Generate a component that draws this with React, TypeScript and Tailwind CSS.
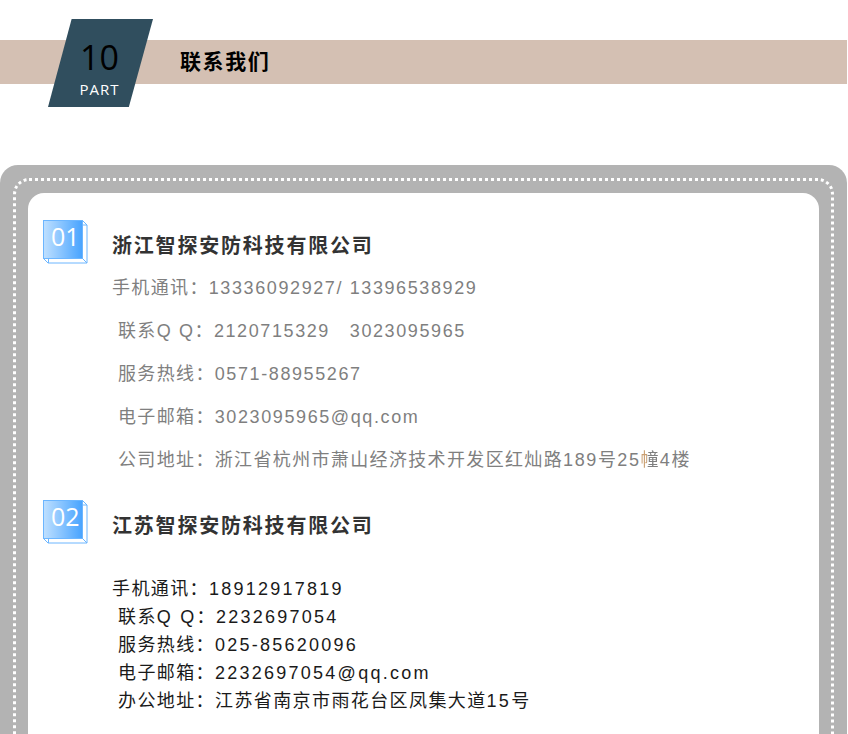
const FONT = "font-['Liberation_Sans','Noto_Sans_CJK_SC',sans-serif]";

function Badge({ n }: { n: string }) {
  const id = `g${n}`;
  return (
    <div className="relative h-[44px] w-[45px] shrink-0">
      <svg width="45" height="44" viewBox="0 0 45 44" className="block">
        <defs>
          <linearGradient id={id} x1="0" x2="1" y1="0" y2="0">
            <stop offset="0" stopColor="#bfe0ff" />
            <stop offset="1" stopColor="#47a3ff" />
          </linearGradient>
        </defs>
        <path d="M39.5 0.5 L44 5 V43 H5 L0.5 38.5" fill="#fff" stroke="#6cb6ff" strokeWidth="1" />
        <path d="M5.5 38.5 V43 M39.5 38.5 L44 43 M39.5 5 H44" fill="none" stroke="#6cb6ff" strokeWidth="1" />
        <rect x="0.5" y="0.5" width="39" height="38" fill={`url(#${id})`} stroke="#6cb6ff" strokeWidth="1" />
      </svg>
      <span className="absolute left-[8px] top-[1px] text-[25px] font-medium leading-[30px] text-white font-['Open_Sans',sans-serif]">{n}</span>
    </div>
  );
}

function Row({ children, indent = true }: { children: React.ReactNode; indent?: boolean }) {
  return <p className={`whitespace-pre ${indent ? "pl-[6px]" : ""}`}>{children}</p>;
}

function A({ children }: { children: React.ReactNode }) {
  return <span className="tracking-[1.6px]">{children}</span>;
}

function B({ children }: { children: React.ReactNode }) {
  return <span className="tracking-[2.25px]">{children}</span>;
}

function Company({ n, name }: { n: string; name: string }) {
  return (
    <div className="flex items-start pl-[15px]">
      <Badge n={n} />
      <h2 className="ml-[24px] mt-[11px] text-[20px] leading-[30px] font-bold tracking-[1.8px] text-[#333333]">{name}</h2>
    </div>
  );
}

export default function App() {
  return (
    <div className={`h-[734px] w-[847px] overflow-hidden bg-white pt-[40px] ${FONT}`}>
      <div className="flex h-[44px] items-center bg-[#d4c0b3]">
        <div className="relative z-10 ml-[48px] -mb-[2px] flex h-[88px] w-[105px] shrink-0 flex-col items-center bg-[#304e5e] pr-[2px] [clip-path:polygon(22.5%_0,100%_0,77%_100%,0_100%)]">
          <span className="mt-[19px] text-[34px] leading-[38px] text-black font-['Open_Sans',sans-serif]">10</span>
          <span className="mt-[3px] text-[15px] leading-[20px] tracking-[1px] text-white font-['Open_Sans',sans-serif]">PART</span>
        </div>
        <h1 className="ml-[27px] text-[21px] font-bold tracking-[1.6px] text-black">联系我们</h1>
      </div>

      <div className="mt-[81px] h-[600px] rounded-t-[18px] bg-[#b3b3b3] p-[13px]">
        <div className="h-[600px] rounded-[16px] border-[3px] border-dotted border-white p-[12px]">
          <div className="h-[600px] rounded-[16px] bg-white pt-[27px]">
            <Company n="01" name="浙江智探安防科技有限公司" />
            <div className="mt-[3px] pl-[84px] text-[18px] leading-[43px] tracking-[1.35px] text-[#7f7f7f]">
              <Row indent={false}>手机通讯：<A>13336092927/ 13396538929</A></Row>
              <Row>联系<A>Q Q</A>：<A>2120715329   3023095965</A></Row>
              <Row>服务热线：<A>0571-88955267</A></Row>
              <Row>电子邮箱：<A>3023095965@qq.com</A></Row>
              <Row>
                公司地址：浙江省杭州市萧山经济技术开发区红灿路<A>189</A>号<A>25</A>
                <span className="bg-[linear-gradient(90deg,#c99e70_0%,#c99e70_30%,#7f7f7f_30%,#7f7f7f_100%)] bg-clip-text text-transparent">幢</span>
                <A>4</A>楼
              </Row>
            </div>
            <div className="mt-[18px]">
              <Company n="02" name="江苏智探安防科技有限公司" />
            </div>
            <div className="mt-[31px] pl-[84px] text-[18px] leading-[28px] tracking-[1.4px] text-[#1a1a1a]">
              <Row indent={false}>手机通讯：<B>18912917819</B></Row>
              <Row>联系<B>Q Q</B>：<B>2232697054</B></Row>
              <Row>服务热线：<B>025-85620096</B></Row>
              <Row>电子邮箱：<B>2232697054@qq.com</B></Row>
              <Row>办公地址：江苏省南京市雨花台区凤集大道<B>15</B>号</Row>
            </div>
          </div>
        </div>
      </div>
    </div>
  );
}
